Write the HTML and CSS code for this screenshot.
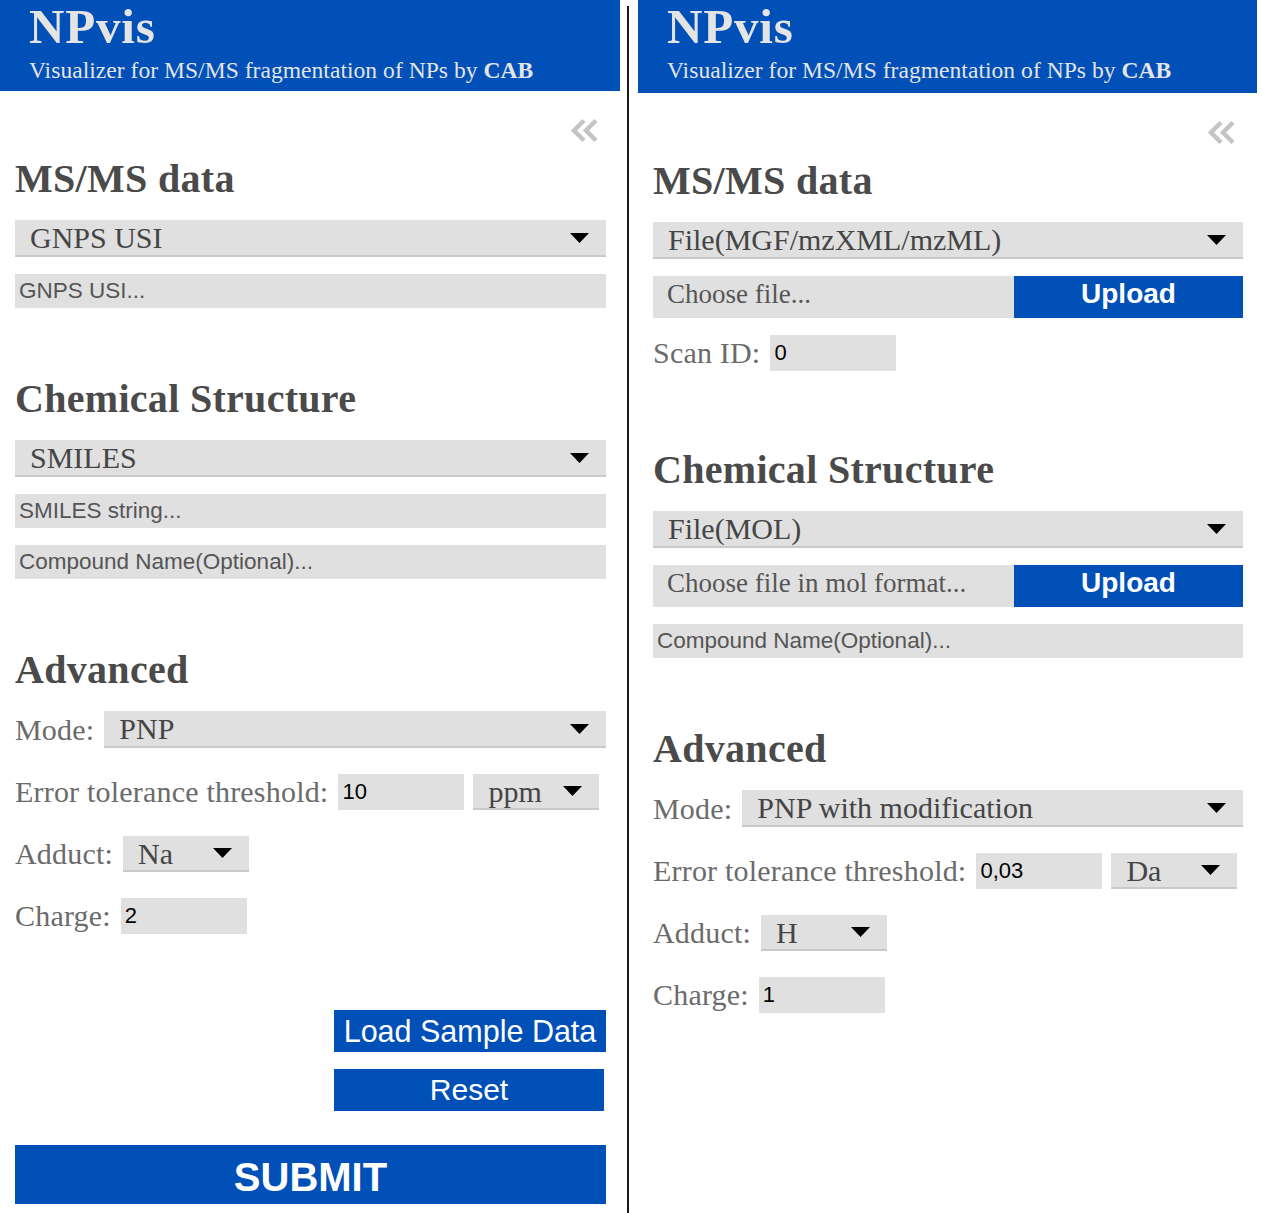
FILE: index.html
```html
<!DOCTYPE html>
<html lang="en">
<head>
<meta charset="utf-8">
<title>NPvis</title>
<link rel="stylesheet" href="styles.css">
</head>
<body>
<div class="page">
  <section class="panel panel-left">
    <header class="header">
      <div class="brand">NPvis</div>
      <div class="tagline">Visualizer for MS/MS fragmentation of NPs by <b>CAB</b></div>
    </header>
    <div class="inner">
      <div class="collapse-row">
        <svg class="collapse" width="28" height="25" viewBox="0 0 28 25"><polyline points="14,2.5 4,12.5 14,22.5" /><polyline points="26,2.5 16,12.5 26,22.5" /></svg>
      </div>
      <h2 class="heading first">MS/MS data</h2>
      <div class="select gap-top"><span>GNPS USI</span><svg class="caret" width="19" height="10" viewBox="0 0 19 10"><polygon points="0,0 19,0 9.5,10"/></svg></div>
      <input class="field gap-top" type="text" placeholder="GNPS USI...">

      <h2 class="heading">Chemical Structure</h2>
      <div class="select gap-top"><span>SMILES</span><svg class="caret" width="19" height="10" viewBox="0 0 19 10"><polygon points="0,0 19,0 9.5,10"/></svg></div>
      <input class="field gap-top" type="text" placeholder="SMILES string...">
      <input class="field gap-top" type="text" placeholder="Compound Name(Optional)...">

      <h2 class="heading">Advanced</h2>
      <div class="row first-row">
        <span class="label">Mode:</span>
        <div class="select grow"><span>PNP</span><svg class="caret" width="19" height="10" viewBox="0 0 19 10"><polygon points="0,0 19,0 9.5,10"/></svg></div>
      </div>
      <div class="row">
        <span class="label">Error tolerance threshold:</span>
        <input class="field small" type="text" value="10">
        <div class="select small unit"><span>ppm</span><svg class="caret" width="19" height="10" viewBox="0 0 19 10"><polygon points="0,0 19,0 9.5,10"/></svg></div>
      </div>
      <div class="row">
        <span class="label">Adduct:</span>
        <div class="select small"><span>Na</span><svg class="caret" width="19" height="10" viewBox="0 0 19 10"><polygon points="0,0 19,0 9.5,10"/></svg></div>
      </div>
      <div class="row">
        <span class="label">Charge:</span>
        <input class="field small" type="text" value="2">
      </div>

      <button class="btn btn-load">Load Sample Data</button>
      <button class="btn btn-reset">Reset</button>
      <button class="btn btn-submit">SUBMIT</button>
    </div>
  </section>

  <div class="divider"></div>

  <section class="panel panel-right">
    <header class="header header-tall">
      <div class="brand">NPvis</div>
      <div class="tagline">Visualizer for MS/MS fragmentation of NPs by <b>CAB</b></div>
    </header>
    <div class="inner">
      <div class="collapse-row">
        <svg class="collapse" width="28" height="25" viewBox="0 0 28 25"><polyline points="14,2.5 4,12.5 14,22.5" /><polyline points="26,2.5 16,12.5 26,22.5" /></svg>
      </div>
      <h2 class="heading first">MS/MS data</h2>
      <div class="select gap-top"><span>File(MGF/mzXML/mzML)</span><svg class="caret" width="19" height="10" viewBox="0 0 19 10"><polygon points="0,0 19,0 9.5,10"/></svg></div>
      <div class="file-row gap-top">
        <span class="file-label">Choose file...</span>
        <button class="upload">Upload</button>
      </div>
      <div class="row scan-row">
        <span class="label">Scan ID:</span>
        <input class="field small" type="text" value="0">
      </div>

      <h2 class="heading">Chemical Structure</h2>
      <div class="select gap-top"><span>File(MOL)</span><svg class="caret" width="19" height="10" viewBox="0 0 19 10"><polygon points="0,0 19,0 9.5,10"/></svg></div>
      <div class="file-row gap-top">
        <span class="file-label">Choose file in mol format...</span>
        <button class="upload">Upload</button>
      </div>
      <input class="field gap-top" type="text" placeholder="Compound Name(Optional)...">

      <h2 class="heading">Advanced</h2>
      <div class="row first-row">
        <span class="label">Mode:</span>
        <div class="select grow"><span>PNP with modification</span><svg class="caret" width="19" height="10" viewBox="0 0 19 10"><polygon points="0,0 19,0 9.5,10"/></svg></div>
      </div>
      <div class="row">
        <span class="label">Error tolerance threshold:</span>
        <input class="field small" type="text" value="0,03">
        <div class="select small unit"><span>Da</span><svg class="caret" width="19" height="10" viewBox="0 0 19 10"><polygon points="0,0 19,0 9.5,10"/></svg></div>
      </div>
      <div class="row">
        <span class="label">Adduct:</span>
        <div class="select small"><span>H</span><svg class="caret" width="19" height="10" viewBox="0 0 19 10"><polygon points="0,0 19,0 9.5,10"/></svg></div>
      </div>
      <div class="row">
        <span class="label">Charge:</span>
        <input class="field small" type="text" value="1">
      </div>
    </div>
  </section>
</div>
</body>
</html>
```
FILE: styles.css
```css
html, body {
  margin: 0;
  padding: 0;
  background: #ffffff;
}

body {
  width: 1262px;
  height: 1213px;
  overflow: hidden;
  font-family: "Liberation Serif", "Times New Roman", serif;
}

.page {
  display: flex;
  align-items: stretch;
  height: 1213px;
}

.panel {
  display: flex;
  flex-direction: column;
}

.panel-left {
  width: 620px;
}

.panel-right {
  width: 619px;
  margin-left: 9px;
}

.divider {
  width: 2px;
  margin-left: 7px;
  margin-top: 6px;
  background: #1a1a1a;
}

/* Header */
.header {
  height: 91px;
  box-sizing: border-box;
  background: #0050b8;
  padding: 3px 0 0 29px;
  color: #e4e4e4;
}

.header-tall {
  height: 93px;
}

.brand {
  font-size: 49px;
  line-height: 48px;
  font-weight: bold;
  letter-spacing: 0.8px;
}

.tagline {
  margin-top: 5px;
  font-size: 23.5px;
  line-height: 28px;
  letter-spacing: 0.05px;
}

.tagline b {
  font-weight: bold;
}

/* Inner column */
.inner {
  display: flex;
  flex-direction: column;
  padding: 0 14px 0 15px;
}

.collapse-row {
  display: flex;
  justify-content: flex-end;
  margin-top: 27px;
  padding-right: 8px;
  height: 25px;
}

.collapse {
  display: block;
  fill: none;
  stroke: #c4c4c4;
  stroke-width: 4.5;
  stroke-linecap: butt;
  stroke-linejoin: miter;
}

.heading {
  margin: 67px 0 0 0;
  font-size: 40px;
  line-height: 48px;
  font-weight: bold;
  letter-spacing: 0.3px;
  color: #4a4a4a;
}

.heading.first {
  margin-top: 12px;
}

.gap-top {
  margin-top: 17px;
}

/* Select-like control */
.select {
  display: flex;
  align-items: center;
  justify-content: space-between;
  height: 37px;
  box-sizing: border-box;
  background: #e0e0e0;
  border-bottom: 2px solid #c9c9c9;
  padding: 0 17px 0 15px;
  font-size: 30px;
  line-height: 35px;
  color: #454545;
}

.caret {
  display: block;
  fill: #000000;
  flex: none;
}

.select.grow {
  flex: 1;
}

.select.small {
  width: 126px;
  height: 36px;
}

.select.unit {
  margin-left: -1px;
}

/* Text inputs */
.field {
  display: block;
  height: 34px;
  box-sizing: border-box;
  border: none;
  outline: none;
  background: #e0e0e0;
  margin-left: 0;
  margin-right: 0;
  padding: 0 4px;
  font-family: "Liberation Sans", Arial, sans-serif;
  font-size: 22.5px;
  color: #000000;
}

.field::placeholder {
  color: #555555;
  opacity: 1;
}

.field.small {
  width: 126px;
  height: 36px;
  font-size: 22px;
}

/* Rows with labels */
.row {
  display: flex;
  align-items: center;
  gap: 10px;
  margin-top: 26px;
}

.row.first-row {
  margin-top: 17px;
}

.label {
  font-size: 30px;
  line-height: 36px;
  letter-spacing: 0.2px;
  color: #6b6b6b;
  white-space: nowrap;
}

.row.scan-row {
  margin-top: 17px;
  margin-bottom: 8px;
}

/* File chooser */
.file-row {
  display: flex;
  height: 42px;
}

.file-label {
  flex: 1;
  background: #e0e0e0;
  padding: 0 0 6px 14px;
  display: flex;
  align-items: center;
  font-size: 27px;
  color: #555555;
}

.upload {
  width: 229px;
  border: none;
  margin: 0;
  background: #0050b8;
  color: #ffffff;
  font-family: "Liberation Sans", Arial, sans-serif;
  font-weight: bold;
  font-size: 28px;
  padding: 0 0 6px 0;
}

/* Buttons */
.btn {
  display: block;
  border: none;
  margin: 0;
  padding: 0;
  background: #0050b8;
  color: #ffffff;
  font-family: "Liberation Sans", Arial, sans-serif;
  cursor: pointer;
}

.btn-load {
  align-self: flex-end;
  width: 272px;
  height: 42px;
  margin-top: 76px;
  font-size: 30.5px;
}

.btn-reset {
  align-self: flex-end;
  width: 270px;
  height: 42px;
  margin-top: 17px;
  margin-right: 2px;
  font-size: 30px;
}

.btn-submit {
  height: 59px;
  margin-top: 34px;
  padding-top: 5px;
  font-size: 40px;
  font-weight: bold;
}
```
